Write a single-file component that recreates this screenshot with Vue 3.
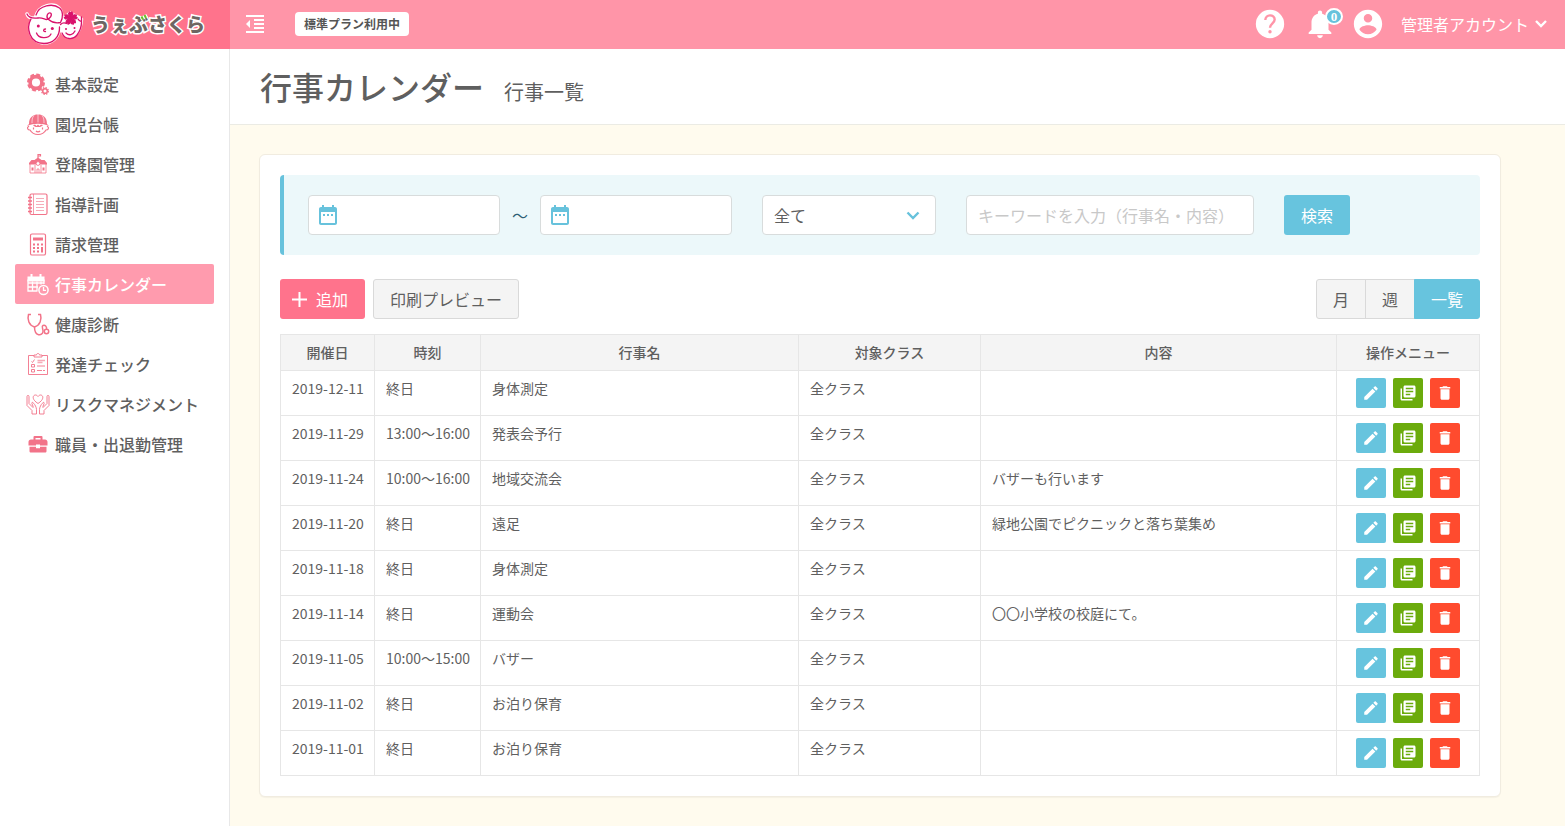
<script setup>
import { ref } from 'vue'

const menu = [
  { label: '基本設定', icon: 'gears' },
  { label: '園児台帳', icon: 'child' },
  { label: '登降園管理', icon: 'school' },
  { label: '指導計画', icon: 'notebook' },
  { label: '請求管理', icon: 'calculator' },
  { label: '行事カレンダー', icon: 'calendar', active: true },
  { label: '健康診断', icon: 'stethoscope' },
  { label: '発達チェック', icon: 'checklist' },
  { label: 'リスクマネジメント', icon: 'hands' },
  { label: '職員・出退勤管理', icon: 'briefcase' },
]

const events = [
  { date: '2019-12-11', time: '終日', name: '身体測定', note: '' },
  { date: '2019-11-29', time: '13:00〜16:00', name: '発表会予行', note: '' },
  { date: '2019-11-24', time: '10:00〜16:00', name: '地域交流会', note: 'バザーも行います' },
  { date: '2019-11-20', time: '終日', name: '遠足', note: '緑地公園でピクニックと落ち葉集め' },
  { date: '2019-11-18', time: '終日', name: '身体測定', note: '' },
  { date: '2019-11-14', time: '終日', name: '運動会', note: '〇〇小学校の校庭にて。' },
  { date: '2019-11-05', time: '10:00〜15:00', name: 'バザー', note: '' },
  { date: '2019-11-02', time: '終日', name: 'お泊り保育', note: '' },
  { date: '2019-11-01', time: '終日', name: 'お泊り保育', note: '' },
]

const views = ['月', '週', '一覧']
const view = ref('一覧')
const from = ref('')
const to = ref('')
const target = ref('all')
const keyword = ref('')
</script>

<template>
  <div class="app">
    <header class="topbar">
      <a class="brand" href="#">
        <svg class="brand-mark" viewBox="0 0 60 42" aria-hidden="true">
          <g fill="#fff" stroke="#fff" stroke-width="3.500" stroke-linejoin="round" stroke-linecap="round">
            <circle cx="20.500" cy="25.500" r="14.500" />
            <path d="M37 25C39 38 56 38 57.500 16L46 10 37 18z" />
            <path d="M12 13C15 3 29-1 35 5c3 3 3.500 10 2 15z" />
            <path d="M3 11c1 3 3 4 6 4" fill="none" />
          </g>
          <g fill="none" stroke="#d9126b" stroke-width="1.300" stroke-linecap="round" stroke-linejoin="round">
            <path d="M7 16C2 25 5 40 20 40.500c9 0 16-6.500 15.500-16.500" />
            <path d="M3 11c2 5 7 4.500 11 4 4-.5 6 1 8.500 1.500 4-.5 6-5 4-6.500-3-1-5 4-2 6.500 3.500 3 8 4 12 3 3-5 2.500-12-1-14.500C29 0 15 2 12 12" />
            <path d="M38 30c3 7 11 7 15 2 3-4 4.500-9 4.500-13" />
            <path d="M54 16c1 2 2 2.500 3.500 2.500V14" />
            <path d="M36.500 21.500c2-2 4-2 6-1" />
            <path d="M12.500 30c2 6 12 6 14.500 1" />
            <path d="M21.500 26c-2.500 0-2.500 3 0 2.500" />
            <path d="M42 30c3 3 7 2 9-2" />
          </g>
          <g fill="#d9126b">
            <circle cx="14.300" cy="23" r="1.500" />
            <circle cx="28.300" cy="25.500" r="1.500" />
            <circle cx="42" cy="26" r="1" />
            <circle cx="50.500" cy="25" r="1" />
            <path d="M46.700 15.300l-2.200-4.600 1-1.700 1.200 1 1.200-1 1 1.700zM46.700 15.300l3.700-3.500 2 .4-.6 1.500 1.300.8-1.300 1.500zM46.700 15.300l4.500 2.400.2 2-1.600 0-.4 1.500-1.900-.6zM46.700 15.300l-.8 5-1.800.9-.5-1.500-1.600 0 .4-2zM46.700 15.300l-5.100.7-1.300-1.500 1.300-.8-.6-1.500 2-.4z" stroke="#d9126b" stroke-width="1.200" stroke-linejoin="round" />
          </g>
        </svg>
        <span class="brand-name">うぇ<span class="bu">ぶ<svg viewBox="0 0 8 8" aria-hidden="true"><path d="M1.500 2.500l1.500 3M4.500 1l1.500 3" stroke="#fff" stroke-width="4" /><path d="M1.500 2.500l1.500 3M4.500 1l1.500 3" stroke="#6abf2a" stroke-width="2" /></svg></span>さくら</span>
      </a>
      <div class="bar">
        <button class="icon-btn collapse" type="button" aria-label="メニューを閉じる">
          <svg viewBox="0 0 24 24" fill="currentColor"><path d="M11 17h10v-2H11v2zm-8-5l4 4V8l-4 4zm0 9h18v-2H3v2zM3 3v2h18V3H3zm8 6h10V7H11v2zm0 4h10v-2H11v2z" /></svg>
        </button>
        <span class="plan">標準プラン利用中</span>
        <div class="bar-right">
          <button class="icon-btn" type="button" aria-label="ヘルプ">
            <svg viewBox="0 0 24 24"><circle cx="12" cy="12" r="10" fill="#fff" /><path d="M8.700 9.200c0-4.400 6.600-4.300 6.600-.3 0 2.500-3.300 2.800-3.300 5.700" fill="none" stroke="#ff95a8" stroke-width="1.700" /><circle cx="12" cy="17.500" r="1.200" fill="#ff95a8" /></svg>
          </button>
          <button class="icon-btn bell" type="button" aria-label="お知らせ">
            <svg viewBox="0 0 24 24" fill="currentColor"><path d="M12 22c1.100 0 2-.9 2-2h-4c0 1.100.89 2 2 2zm6-6v-5c0-3.070-1.640-5.640-4.500-6.320V4c0-.83-.67-1.500-1.500-1.500s-1.500.67-1.500 1.500v.68C7.630 5.360 6 7.920 6 11v5l-2 2v1h16v-1l-2-2z" /></svg>
            <span class="count">0</span>
          </button>
          <button class="account" type="button">
            <svg class="avatar" viewBox="0 0 24 24" fill="currentColor"><path d="M12 2C6.480 2 2 6.480 2 12s4.480 10 10 10 10-4.480 10-10S17.520 2 12 2zm0 3c1.660 0 3 1.340 3 3s-1.340 3-3 3-3-1.340-3-3 1.340-3 3-3zm0 14.200c-2.500 0-4.710-1.280-6-3.220.03-1.990 4-3.080 6-3.080 1.990 0 5.970 1.090 6 3.080-1.290 1.940-3.500 3.220-6 3.220z" /></svg>
            <span>管理者アカウント</span>
            <svg class="caret" viewBox="0 0 12 8" fill="none" stroke="currentColor" stroke-width="2.400"><path d="M1 1l5 5 5-5" /></svg>
          </button>
        </div>
      </div>
    </header>

    <div class="body">
      <nav class="sidebar" aria-label="メインメニュー">
        <a v-for="m in menu" :key="m.label" href="#" class="menu-item" :class="{ active: m.active }">
          <svg class="menu-icon" viewBox="0 0 24 24" fill="none" stroke="currentColor" stroke-width="1.200" aria-hidden="true">
            <g v-if="m.icon === 'gears'">
              <circle cx="10" cy="10.500" r="5.900" stroke-width="3.600" />
              <circle cx="10" cy="10.500" r="7.700" stroke-width="2.600" stroke-dasharray="3.900 2.148" />
              <circle cx="19" cy="19" r="2.300" stroke-width="1.600" />
              <circle cx="19" cy="19" r="3.400" stroke-width="1.200" stroke-dasharray="1.500 1.170" />
            </g>
            <g v-else-if="m.icon === 'child'">
              <path d="M3 12C3 5 7 2.500 12 2.500s9 2.500 9 9.500l2 2c-7-3-15-3-22 0z" fill="currentColor" stroke="none" />
              <path d="M12 2v8.500M8 3.500c-2 2-2 5-2 7.500M16 3.500c2 2 2 5 2 7.500" stroke="#fff" stroke-width=".6" />
              <path d="M3 14c-3 2-1 4 1 4 2 3.500 5 4.500 8 4.500s6-1 8-4.500c2 0 4-2 1-4" />
              <path d="M7 13.500l2-1 1.500 1.500 1.500-1.500 1.500 1.500 1.500-1.500 2 1-3 1.500H9.500z" fill="currentColor" stroke="none" />
              <path d="M7.500 15.500v2M16.500 15.500v2M10 19c1 1.200 3 1.200 4 0" />
            </g>
            <g v-else-if="m.icon === 'school'">
              <path d="M3 11l2.500-3h3L12 5.500 15.500 8h3l2.500 3v1.500H3z" fill="currentColor" stroke="none" />
              <path d="M12 6V2.500h2.500v1.500H12" />
              <path d="M4 12v9h16v-9M9 13v8M15 13v8M11 21v-4h2v4" stroke-width=".8" />
              <circle cx="12" cy="11.500" r="1.900" fill="#fff" stroke-width=".9" />
              <path d="M5.500 15.500h2v3h-2zM16.500 15.500h2v3h-2z" fill="currentColor" stroke="none" />
            </g>
            <g v-else-if="m.icon === 'notebook'">
              <rect x="4" y="2" width="17" height="20.500" rx="1.500" />
              <path d="M7.500 2v20" stroke-width=".7" />
              <path d="M2 5.500h4M2 9h4M2 12.500h4M2 16h4M2 19.500h4" stroke-width="1.300" />
              <path d="M10 6.500h8M10 9.500h8M10 12.500h8M10 15.500h8M10 18.500h8" stroke-width=".6" />
            </g>
            <g v-else-if="m.icon === 'calculator'">
              <rect x="4.500" y="2" width="15" height="21" rx="1.500" />
              <path d="M7 5.500h10v3H7z" fill="currentColor" stroke="none" />
              <path d="M7 12.500h2m2 0h2m2 0h2M7 16h2m2 0h2M7 19.500h2m2 0h2" stroke-width="2" />
              <path d="M16 15v5.500" stroke-width="2" />
            </g>
            <g v-else-if="m.icon === 'calendar'">
              <path d="M1.500 4.500h17v5h-17zM4.500 2h2v3.500h-2zM13.500 2h2v3.500h-2z" fill="currentColor" stroke="none" />
              <path d="M11.500 19H2V7.500M18 7.500V12M2 11h16M2 15h10M6.500 9.500v9.500M11 9.500v9.500M15 9.500v3" stroke-width="1.300" />
              <circle cx="17.500" cy="18" r="4.600" stroke-width="1.500" />
              <path d="M17.500 15v3.300h2.500" stroke-width="1.300" />
            </g>
            <g v-else-if="m.icon === 'stethoscope'" stroke-width="1.500">
              <path d="M5 2.500H2.500C1 7.500 3 13.500 8.500 15c5.500-1.500 7.500-7.500 6-12.500H12" />
              <path d="M8.500 15c0 9.500 8 9.500 8.500 4.500.3-3-2-5 0-6 2-.8 4 1 3.500 3.500" />
              <circle cx="20.500" cy="19.500" r="2.200" />
            </g>
            <g v-else-if="m.icon === 'checklist'" stroke-width=".9">
              <path d="M8 3.500H2.500v19h19v-19H16" />
              <path d="M8 5V3h2.500c0-2 3-2 3 0H16v2z" />
              <path d="M5.500 9.500l1 1 2-3M5.500 12.500h3V15h-3zM5.500 17.500h3V20h-3zM11 14h8M11 18.500h5M17 18.500h2" />
              <path d="M11.500 8.500h7.500M11.500 10.500h5" stroke-width="1.300" opacity=".6" />
            </g>
            <g v-else-if="m.icon === 'hands'" stroke-width=".9">
              <path d="M12 11.500C5 7 7 3 9.500 3c1.500 0 2.500 1.500 2.500 1.500S13 3 14.500 3c2.500 0 4.500 4-2.500 8.500z" />
              <path d="M1 4.500c0-1.500 2-1.500 2 0v7l4 4c1-1-2-4-1-5s4.500 4 4.500 7V22H6v-3.500l-5-5zM23 4.500c0-1.500-2-1.500-2 0v7l-4 4c-1-1 2-4 1-5s-4.500 4-4.500 7V22H18v-3.500l5-5z" />
            </g>
            <g v-else>
              <path d="M8.500 8.500V5h7v3.500" stroke-width="2" stroke-linejoin="round" />
              <path d="M5 7.500h14c1.500 0 2.500 1 2.500 2.500v3.500h-7.500v-1h-4v1H2.500V10C2.500 8.500 3.500 7.500 5 7.500zM3.500 14.700H10v1.500h4v-1.500h6.500V19c0 1-.5 1.500-1.500 1.500H5c-1 0-1.500-.5-1.500-1.500z" fill="currentColor" stroke="none" />
            </g>
          </svg>
          <span>{{ m.label }}</span>
        </a>
      </nav>

      <main class="main">
        <div class="page-head">
          <h1>行事カレンダー</h1>
          <h2>行事一覧</h2>
        </div>

        <div class="content">
          <section class="card">
            <form class="search" @submit.prevent>
              <label class="date">
                <svg viewBox="0 0 24 24" fill="currentColor" aria-hidden="true"><path d="M9 11H7v2h2v-2zm4 0h-2v2h2v-2zm4 0h-2v2h2v-2zm2-7h-1V2h-2v2H8V2H6v2H5c-1.110 0-1.990.9-1.990 2L3 20c0 1.100.89 2 2 2h14c1.100 0 2-.9 2-2V6c0-1.100-.9-2-2-2zm0 16H5V9h14v11z" /></svg>
                <input v-model="from" type="text" aria-label="開始日" />
              </label>
              <span class="tilde">～</span>
              <label class="date">
                <svg viewBox="0 0 24 24" fill="currentColor" aria-hidden="true"><path d="M9 11H7v2h2v-2zm4 0h-2v2h2v-2zm4 0h-2v2h2v-2zm2-7h-1V2h-2v2H8V2H6v2H5c-1.110 0-1.990.9-1.990 2L3 20c0 1.100.89 2 2 2h14c1.100 0 2-.9 2-2V6c0-1.100-.9-2-2-2zm0 16H5V9h14v11z" /></svg>
                <input v-model="to" type="text" aria-label="終了日" />
              </label>
              <div class="select">
                <select v-model="target" aria-label="対象クラス">
                  <option value="all">全て</option>
                </select>
                <svg viewBox="0 0 14 9" fill="none" stroke="currentColor" stroke-width="2.400" aria-hidden="true"><path d="M1.500 1.500L7 7l5.500-5.500" /></svg>
              </div>
              <input v-model="keyword" class="keyword" type="text" aria-label="キーワード" placeholder="キーワードを入力（行事名・内容）" />
              <button class="btn blue" type="submit">検索</button>
            </form>

            <div class="toolbar">
              <button class="btn add" type="button">
                <svg viewBox="0 0 15 15" fill="none" stroke="currentColor" stroke-width="2" aria-hidden="true"><path d="M7.500 0v15M0 7.500h15" /></svg>
                追加
              </button>
              <button class="btn plain" type="button">印刷プレビュー</button>
              <div class="views">
                <button v-for="v in views" :key="v" class="btn plain" :class="{ on: v === view }" type="button" @click="view = v">{{ v }}</button>
              </div>
            </div>

            <table>
              <colgroup>
                <col class="c-date" /><col class="c-time" /><col class="c-name" /><col class="c-class" /><col /><col class="c-ops" />
              </colgroup>
              <thead>
                <tr><th>開催日</th><th>時刻</th><th>行事名</th><th>対象クラス</th><th>内容</th><th>操作メニュー</th></tr>
              </thead>
              <tbody>
                <tr v-for="e in events" :key="e.date">
                  <td>{{ e.date }}</td>
                  <td>{{ e.time }}</td>
                  <td>{{ e.name }}</td>
                  <td>全クラス</td>
                  <td>{{ e.note }}</td>
                  <td>
                    <div class="ops">
                      <button class="op edit" type="button" aria-label="編集"><svg viewBox="0 0 24 24" fill="currentColor"><path d="M3 17.250V21h3.750L17.810 9.940l-3.750-3.750L3 17.250zM20.710 7.040c.39-.39.39-1.020 0-1.410l-2.340-2.340c-.39-.39-1.020-.39-1.410 0l-1.830 1.830 3.750 3.750 1.830-1.830z" /></svg></button>
                      <button class="op copy" type="button" aria-label="複製"><svg viewBox="0 0 24 24" fill="currentColor"><path d="M4 6H2v14c0 1.100.9 2 2 2h14v-2H4V6zm16-4H8c-1.100 0-2 .9-2 2v12c0 1.100.9 2 2 2h12c1.100 0 2-.9 2-2V4c0-1.100-.9-2-2-2zm-1 9H9V9h10v2zm-4 4H9v-2h6v2zm4-8H9V5h10v2z" /></svg></button>
                      <button class="op del" type="button" aria-label="削除"><svg viewBox="0 0 24 24" fill="currentColor"><path d="M6 19c0 1.100.9 2 2 2h8c1.100 0 2-.9 2-2V7H6v12zM19 4h-3.500l-1-1h-5l-1 1H5v2h14V4z" /></svg></button>
                    </div>
                  </td>
                </tr>
              </tbody>
            </table>
          </section>
        </div>
      </main>
    </div>
  </div>
</template>

<style>
body {
  margin: 0;
  background: #fff;
}
</style>

<style scoped>
.app,
.app * {
  box-sizing: border-box;
}
.app {
  display: flex;
  flex-direction: column;
  min-height: 100vh;
  font-family: "Noto Sans CJK JP", "Noto Sans", sans-serif;
  font-size: 16px;
  line-height: 24px;
  color: #5f5f5f;
}
button,
input,
select {
  font: inherit;
  color: inherit;
  margin: 0;
}
button {
  padding: 0;
  border: 0;
  background: none;
  cursor: pointer;
}
svg {
  display: block;
  flex: none;
}
a {
  color: inherit;
  text-decoration: none;
}

.topbar {
  display: flex;
  height: 49px;
}
.brand {
  flex: none;
  display: flex;
  align-items: center;
  gap: 7px;
  width: 230px;
  padding: 0 0 2px 24px;
  background: #ff738c;
}
.brand-mark {
  width: 60px;
  height: 42px;
}
.brand-name {
  font-size: 19px;
  font-weight: 900;
  color: #6e6663;
  white-space: nowrap;
  -webkit-text-stroke: 3px #fff;
  paint-order: stroke fill;
}
.bu {
  position: relative;
}
.bu svg {
  position: absolute;
  top: 4px;
  right: 0;
  width: 8px;
  height: 8px;
}
.bar {
  flex: 1;
  display: flex;
  align-items: center;
  padding: 0 18px 1px 13px;
  background: #ff95a8;
  color: #fff;
}
.icon-btn svg,
.avatar {
  width: 34px;
  height: 34px;
}
.collapse svg {
  width: 24px;
  height: 24px;
}
.plan {
  margin-left: 28px;
  padding: 0 9px;
  border-radius: 4px;
  background: #fff;
  color: #555;
  font-size: 12px;
  font-weight: 700;
}
.bar-right {
  display: flex;
  align-items: center;
  gap: 16px;
  margin-left: auto;
}
.bell {
  position: relative;
}
.count {
  position: absolute;
  top: 1px;
  right: -6px;
  width: 18px;
  height: 17px;
  border: 2px solid #fff;
  border-radius: 50%;
  background: #67c2dc;
  font: 700 13px/13px "Liberation Serif", serif;
  text-align: center;
}
.account {
  display: flex;
  align-items: center;
  gap: 16px;
}
.account .avatar {
  margin-left: -2px;
}
.account .caret {
  width: 12px;
  height: 8px;
  margin-left: -10px;
}

.body {
  flex: 1;
  display: flex;
}
.sidebar {
  flex: none;
  width: 230px;
  padding: 15px;
  border-right: 1px solid #e8e8e8;
}
.menu-item {
  display: flex;
  align-items: center;
  gap: 5px;
  height: 40px;
  padding-left: 11px;
  border-radius: 2px;
  font-weight: 500;
  white-space: nowrap;
}
.menu-icon {
  width: 24px;
  height: 24px;
  color: #f27389;
}
.menu-item.active,
.active .menu-icon {
  color: #fff;
}
.menu-item.active {
  background: #ff9bae;
}

.main {
  flex: 1;
  min-width: 0;
  display: flex;
  flex-direction: column;
}
.page-head {
  display: flex;
  align-items: baseline;
  gap: 20px;
  height: 76px;
  padding: 13px 30px 0;
  border-bottom: 1px solid #ebebe4;
}
h1,
h2 {
  margin: 0;
  line-height: 48px;
}
h1 {
  font-size: 32px;
  font-weight: 500;
}
h2 {
  font-size: 20px;
  font-weight: 400;
}
.content {
  flex: 1;
  padding: 29px;
  background: #fffbee;
}
.card {
  max-width: 1242px;
  padding: 20px;
  border: 1px solid #f1ece0;
  border-radius: 6px;
  background: #fff;
  box-shadow: 0 1px 1px #0000000a;
}

.search {
  display: flex;
  align-items: center;
  height: 80px;
  padding: 0 24px;
  border-left: 4px solid #67c2dc;
  border-radius: 4px;
  background: #ecf8fa;
}
.search input,
.search select {
  width: 100%;
  height: 40px;
  border: 1px solid #d8dcdc;
  border-radius: 4px;
  background: #fff;
}
.date {
  position: relative;
  width: 192px;
}
.date input {
  padding: 0 10px 0 40px;
}
.date svg {
  position: absolute;
  top: 8px;
  left: 8px;
  width: 24px;
  height: 24px;
  color: #67c2dc;
}
.tilde {
  width: 40px;
  text-align: center;
  color: #2e5f74;
}
.select {
  position: relative;
  width: 174px;
  margin: 0 30px;
}
.select select {
  padding: 0 36px 0 11px;
  appearance: none;
}
.select svg {
  position: absolute;
  top: 16px;
  right: 16px;
  width: 14px;
  height: 9px;
  color: #67c2dc;
  pointer-events: none;
}
.search .keyword {
  width: 288px;
  margin-right: 30px;
  padding: 0 11px;
}
.keyword::placeholder {
  color: #c8c8c8;
  opacity: 1;
}
.btn {
  height: 40px;
  padding: 0 16px;
  border: 1px solid transparent;
  border-radius: 3px;
  white-space: nowrap;
}
.blue {
  background: #67c4de;
  color: #fff;
}
.toolbar {
  display: flex;
  gap: 8px;
  margin: 24px 0 15px;
}
.add {
  display: flex;
  align-items: center;
  gap: 9px;
  padding-left: 11px;
  background: #ff738c;
  color: #fff;
}
.add svg {
  width: 15px;
  height: 15px;
}
.plain {
  border-color: #d9d9d9;
  background: #f4f4f4;
}
.views {
  display: flex;
  margin-left: auto;
}
.views .btn + .btn {
  margin-left: -1px;
}
.views .btn:not(:first-child) {
  border-top-left-radius: 0;
  border-bottom-left-radius: 0;
}
.views .btn:not(:last-child) {
  border-top-right-radius: 0;
  border-bottom-right-radius: 0;
}
.views .on {
  border-color: #67c4de;
  background: #67c4de;
  color: #fff;
}

table {
  width: 100%;
  border-collapse: collapse;
  table-layout: fixed;
  font-size: 14px;
  line-height: 20px;
}
.c-date {
  width: 94px;
}
.c-time {
  width: 106px;
}
.c-name {
  width: 318px;
}
.c-class {
  width: 182px;
}
.c-ops {
  width: 143px;
}
th,
td {
  border: 1px solid #e6e6e6;
}
th {
  padding: 7px 0 8px;
  background: #f4f4f4;
  font-weight: 500;
}
td {
  padding: 7px 0 7px 11px;
  vertical-align: top;
  white-space: nowrap;
}
td:last-child {
  padding-left: 0;
}
.ops {
  display: flex;
  justify-content: center;
  gap: 7px;
}
.op {
  display: grid;
  place-items: center;
  width: 30px;
  height: 30px;
  border-radius: 2px;
  color: #fff;
}
.op svg {
  width: 18px;
  height: 18px;
}
.edit {
  background: #67c4de;
}
.copy {
  background: #6bab0c;
}
.del {
  background: #ff4b2e;
}
</style>
